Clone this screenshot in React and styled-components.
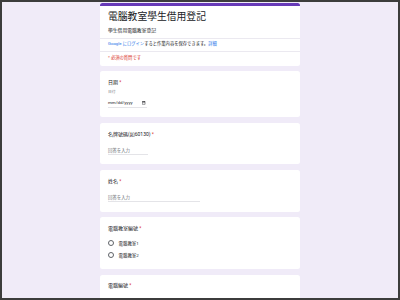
import React from 'react';
import styled, { createGlobalStyle } from 'styled-components';

const Global = createGlobalStyle`
  html, body { margin: 0; padding: 0; background: #3c3c3c; }
  body { font-family: Roboto, "Noto Sans CJK JP", "Noto Sans CJK TC", sans-serif; }
  * { box-sizing: border-box; }
`;

const Frame = styled.div`
  width: 400px;
  height: 300px;
  border: 2px solid #3c3c3c;
  background: #f0ebf8;
  overflow: hidden;
  display: flex;
  justify-content: center;
`;

const Column = styled.div`
  width: 200px;
  flex-shrink: 0;
  padding-top: 1.3px;
  display: flex;
  flex-direction: column;
  gap: 5.4px;
`;

const Card = styled.section`
  background: #fff;
  border-radius: 2.5px;
  padding: 7.8px 8px ${p => p.$pb || '9.3px'};
  display: flex;
  flex-direction: column;
  align-items: flex-start;
`;

const HeaderCard = styled.section`
  background: #fff;
  border-radius: 2.5px;
  border-top: 3px solid #673ab7;
  display: flex;
  flex-direction: column;
`;

const HeaderSection = styled.div`
  padding: ${p => p.$pad};
  border-top: ${p => (p.$divided ? '1px solid #ebe9f0' : 'none')};
`;

const Title = styled.h1`
  margin: 0;
  font-size: 9.8px;
  line-height: 12px;
  font-weight: 400;
  color: #202124;
  white-space: nowrap;
`;

const Subtitle = styled.p`
  margin: 4.5px 0 0;
  font-size: 4.8px;
  line-height: 6px;
  color: #202124;
`;

const SmallLine = styled.p`
  margin: 0;
  font-size: 4.3px;
  line-height: 6px;
  color: ${p => p.$color || '#202124'};
  white-space: nowrap;
`;

const Link = styled.span`
  color: #1a73e8;
`;

const QLabel = styled.div`
  font-size: 5px;
  line-height: 6px;
  color: #202124;
  white-space: nowrap;
`;

const Star = styled.span`
  color: #d93025;
`;

const Hint = styled.div`
  margin-top: 5.2px;
  font-size: 3.75px;
  line-height: 4px;
  color: #70757a;
`;

const DateField = styled.div`
  margin-top: 5.8px;
  width: 39px;
  display: flex;
  align-items: center;
  justify-content: space-between;
  padding-right: 1.5px;
  padding-bottom: 1.3px;
  border-bottom: 1px solid #e4e4e8;
  font-size: 4.4px;
  line-height: 6px;
  color: #202124;
`;

const TextField = styled.div`
  margin-top: 11px;
  width: ${p => p.$w}px;
  padding-bottom: 0.6px;
  border-bottom: 1px solid #e4e4e8;
  font-size: 4.4px;
  line-height: 6px;
  color: #70757a;
`;

const RadioList = styled.div`
  margin-top: 9.2px;
  display: flex;
  flex-direction: column;
  gap: 6.6px;
`;

const RadioRow = styled.label`
  display: flex;
  align-items: center;
  height: 6px;
  gap: 4.6px;
  font-size: 4.4px;
  color: #202124;
`;

const RadioCircle = styled.span`
  width: 6px;
  height: 6px;
  border-radius: 50%;
  border: 0.8px solid #5f6368;
  flex-shrink: 0;
`;

const CalendarIcon = () => (
  <svg width="3.4" height="3.6" viewBox="0 0 12 13" aria-hidden="true">
    <path d="M1 2h10v10H1z" fill="none" stroke="#202124" strokeWidth="1.6" />
    <path d="M1 2h10v3H1z" fill="#202124" />
    <path d="M3 0.5v2M9 0.5v2" stroke="#202124" strokeWidth="1.6" />
  </svg>
);

const Question = ({ label }) => (
  <QLabel>
    {label} <Star>*</Star>
  </QLabel>
);

export default function App() {
  return (
    <>
      <Global />
      <Frame>
        <Column>
          <HeaderCard>
            <HeaderSection $pad="5.2px 8px 4px">
              <Title>電腦教室學生借用登記</Title>
              <Subtitle>學生借用電腦教室登記</Subtitle>
            </HeaderSection>
            <HeaderSection $divided $pad="2.5px 8px 4px">
              <SmallLine>
                <Link>Google にログイン</Link>すると作業内容を保存できます。<Link>詳細</Link>
              </SmallLine>
            </HeaderSection>
            <HeaderSection $divided $pad="2.5px 8px 5px">
              <SmallLine $color="#d93025">* 必須の質問です</SmallLine>
            </HeaderSection>
          </HeaderCard>

          <Card $pb="8.9px">
            <Question label="日期" />
            <Hint>日付</Hint>
            <DateField>
              <span>mm/dd/yyyy</span>
              <CalendarIcon />
            </DateField>
          </Card>

          <Card>
            <Question label="名牌號碼(如60130)" />
            <TextField $w={40}>回答を入力</TextField>
          </Card>

          <Card>
            <Question label="姓名" />
            <TextField $w={92}>回答を入力</TextField>
          </Card>

          <Card $pb="10.7px">
            <Question label="電腦教室編號" />
            <RadioList>
              <RadioRow>
                <RadioCircle />
                電腦教室1
              </RadioRow>
              <RadioRow>
                <RadioCircle />
                電腦教室2
              </RadioRow>
            </RadioList>
          </Card>

          <Card $pb="20px">
            <Question label="電腦編號" />
          </Card>
        </Column>
      </Frame>
    </>
  );
}
